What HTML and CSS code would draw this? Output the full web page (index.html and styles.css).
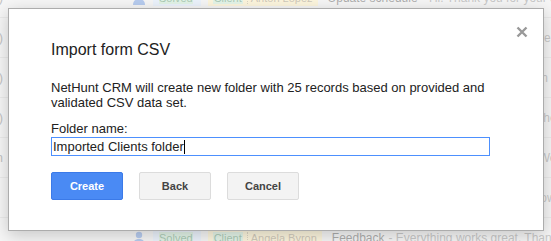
FILE: index.html
```html
<!DOCTYPE html>
<html lang="en">
<head>
    <meta charset="UTF-8">
    <meta name="viewport" content="width=device-width, initial-scale=1.0">
    <title>Import form CSV</title>
    <link rel="stylesheet" href="styles.css">
</head>
<body>
    <div class="inbox">
        <div class="row">
            <span class="num">(2)</span>
            <svg class="avatar" viewBox="0 0 12 14"><circle cx="6" cy="4" r="3.2"/><path d="M0 14c0-4 2.5-6 6-6s6 2 6 6z"/></svg>
            <span class="status"><span class="badge solved">Solved</span></span>
            <span class="tag"><span class="badge client">Client</span><span class="name">Anton Lopez</span></span>
            <span class="subject">Update schedule</span>
            <span class="snippet">- Hi. Thank you for your quick reply, see you soon</span>
        </div>
        <div class="row">
            <span class="num">(5)</span>
            <svg class="avatar" viewBox="0 0 12 14"><circle cx="6" cy="4" r="3.2"/><path d="M0 14c0-4 2.5-6 6-6s6 2 6 6z"/></svg>
            <span class="status"><span class="badge solved">Solved</span></span>
            <span class="tag"><span class="badge client">Client</span><span class="name">Mark Stone</span></span>
            <span class="subject">Pricing</span>
            <span class="snippet">- Hello, we would like to know more about your plans for the new team e</span>
        </div>
        <div class="row">
            <span class="num">(3)</span>
            <svg class="avatar" viewBox="0 0 12 14"><circle cx="6" cy="4" r="3.2"/><path d="M0 14c0-4 2.5-6 6-6s6 2 6 6z"/></svg>
            <span class="status"><span class="badge open">Open</span></span>
            <span class="tag"><span class="badge client">Client</span><span class="name">Maria Gomez</span></span>
            <span class="subject">Question</span>
            <span class="snippet">- Could you please help me with my account settings, I am not su</span>
        </div>
        <div class="row">
            <span class="num">(2)</span>
            <svg class="avatar" viewBox="0 0 12 14"><circle cx="6" cy="4" r="3.2"/><path d="M0 14c0-4 2.5-6 6-6s6 2 6 6z"/></svg>
            <span class="status"><span class="badge solved">Solved</span></span>
            <span class="tag"><span class="badge client">Client</span><span class="name">John Carter</span></span>
            <span class="subject">Invoice</span>
            <span class="snippet">- Please send me the invoice for the last month of our order for t</span>
        </div>
        <div class="row">
            <span class="num">Ann</span>
            <svg class="avatar" viewBox="0 0 12 14"><circle cx="6" cy="4" r="3.2"/><path d="M0 14c0-4 2.5-6 6-6s6 2 6 6z"/></svg>
            <span class="status"><span class="badge open">Open</span></span>
            <span class="tag"><span class="badge client">Client</span><span class="name">Ann Miller</span></span>
            <span class="subject">Delivery</span>
            <span class="snippet">- When will the delivery be ready? We need it before the end of the month more</span>
        </div>
        <div class="row">
            <span class="num">&nbsp;</span>
            <svg class="avatar" viewBox="0 0 12 14"><circle cx="6" cy="4" r="3.2"/><path d="M0 14c0-4 2.5-6 6-6s6 2 6 6z"/></svg>
            <span class="status"><span class="badge solved">Solved</span></span>
            <span class="tag"><span class="badge client">Client</span><span class="name">Peter Smith</span></span>
            <span class="subject">Meeting</span>
            <span class="snippet">- Let's schedule a call for tomorrow afternoon if it suits you to make</span>
        </div>
        <div class="row">
            <span class="num">&nbsp;</span>
            <svg class="avatar" viewBox="0 0 12 14"><circle cx="6" cy="4" r="3.2"/><path d="M0 14c0-4 2.5-6 6-6s6 2 6 6z"/></svg>
            <span class="status"><span class="badge solved">Solved</span></span>
            <span class="tag"><span class="badge client">Client</span><span class="name">Angela Byron</span></span>
            <span class="subject">Feedback</span>
            <span class="snippet">- Everything works great. Thanks!</span>
        </div>
    </div>

    <div class="overlay"></div>

    <div class="dialog">
        <svg class="close" viewBox="0 0 12 12"><path d="M1.5 1.5l9 9M10.5 1.5l-9 9"/></svg>
        <h2>Import form CSV</h2>
        <p>NetHunt CRM will create new folder with 25 records based on provided and validated CSV data set.</p>
        <label>Folder name:</label>
        <div class="field">Imported Clients folder<span class="caret"></span></div>
        <div class="actions">
            <button class="btn primary">Create</button>
            <button class="btn">Back</button>
            <button class="btn">Cancel</button>
        </div>
    </div>
</body>
</html>
```

FILE: styles.css
```css
body { margin: 0; font-family: "Liberation Sans", Arial, sans-serif; background: #e8e8e8; overflow: hidden; height: 241px; }

.inbox { margin-top: -22px; }
.row { display: flex; align-items: center; height: 40px; box-sizing: border-box; border-bottom: 1px solid #cdcdcd; white-space: nowrap; font-size: 12px; color: #222; }
.num { width: 130px; margin-left: -127px; text-align: right; color: #666; font-size: 13px; flex-shrink: 0; }
.avatar { width: 12px; height: 14px; margin-left: 130px; fill: #4d7fd8; flex-shrink: 0; }
.status { margin-left: 8px; padding: 2px 8px 2px 6px; background: #cfe0f8; flex-shrink: 0; font-size: 11px; }
.tag { margin-left: 7px; padding: 2px 5px; background: #fbe8ad; color: #8a7a55; flex-shrink: 0; font-size: 11px; }
.badge { display: inline-block; color: #2e7d4a; }
.solved { background: #b9e4c5; }
.open { background: #f6c3b8; color: #a0442f; }
.client { background: #bfe6c8; padding: 0 1px; }
.name { margin-left: 4px; padding-left: 3px; border-left: 1px dotted #a89a70; }
.subject { margin-left: 10px; font-size: 12px; color: #333; }
.snippet { margin-left: 4px; font-size: 12px; color: #777; }

.overlay { position: absolute; left: 0; top: 0; right: 0; bottom: 0; background: rgba(255, 255, 255, 0.6); }

.dialog { position: absolute; left: 8px; top: 8px; width: 536px; box-sizing: border-box; padding: 31px 42px 30px; background: #fff; border: 1px solid #acacac; box-shadow: 0 4px 16px rgba(0, 0, 0, 0.2); color: #222; }
.dialog h2 { margin: 0; font-size: 16px; line-height: 20px; font-weight: normal; }
.dialog p { margin: 20px 0 0; font-size: 13px; line-height: 15px; }
.dialog label { display: block; margin-top: 11px; font-size: 13px; line-height: 15px; }
.close { position: absolute; right: 15px; top: 17px; width: 12px; height: 12px; stroke: #999; stroke-width: 2.4; fill: none; }

.field { margin-top: 1px; width: 439px; height: 19px; box-sizing: border-box; border: 1px solid #4d90fe; padding: 0 1px; font-size: 13px; line-height: 17px; }
.caret { display: inline-block; width: 1px; height: 14px; background: #000; vertical-align: -3px; }

.actions { display: flex; gap: 16px; margin-top: 16px; }
.btn { width: 72px; height: 28px; box-sizing: border-box; border: 1px solid #dcdcdc; border-radius: 2px; background: #f3f3f3; color: #444; font-family: "Liberation Sans", Arial, sans-serif; font-size: 11px; font-weight: bold; padding: 0; }
.btn.primary { background: #4a8af4; border-color: #3b7ae8; color: #fff; }
```
